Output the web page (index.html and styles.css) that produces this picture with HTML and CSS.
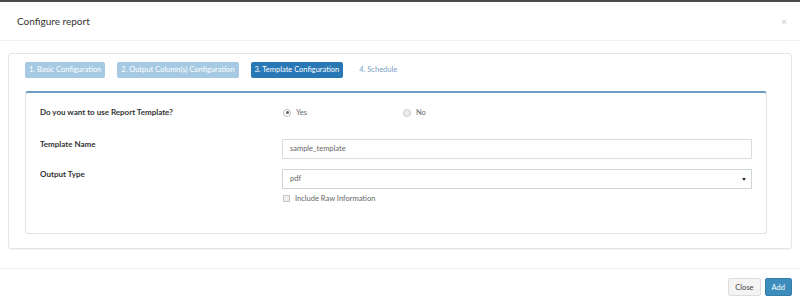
FILE: index.html
```html
<!DOCTYPE html>
<html lang="en">

<head>
    <meta charset="UTF-8">
    <title>Configure report</title>
    <link rel="stylesheet" href="styles.css">
</head>

<body>
    <div class="modal">
        <div class="modal-header">
            <span class="modal-title">Configure report</span>
            <span class="close">&times;</span>
        </div>

        <div class="modal-body">
            <div class="wizard">
                <div class="steps">
                    <span class="step done">1. Basic Configuration</span>
                    <span class="step done">2. Output Column(s) Configuration</span>
                    <span class="step active">3. Template Configuration</span>
                    <span class="step next">4. Schedule</span>
                </div>

                <div class="box">
                    <div class="row row-first">
                        <div class="label">Do you want to use Report Template?</div>
                        <div class="control radios">
                            <span class="option"><span class="radio checked"></span>Yes</span>
                            <span class="option"><span class="radio"></span>No</span>
                        </div>
                    </div>
                    <div class="row">
                        <div class="label">Template Name</div>
                        <div class="control">
                            <div class="input">sample_template</div>
                        </div>
                    </div>
                    <div class="row">
                        <div class="label">Output Type</div>
                        <div class="control">
                            <div class="input select">pdf<span class="caret"></span></div>
                            <div class="check"><span class="checkbox"></span>Include Raw Information</div>
                        </div>
                    </div>
                </div>
            </div>
        </div>

        <div class="modal-footer">
            <button class="btn btn-default">Close</button>
            <button class="btn btn-primary">Add</button>
        </div>
    </div>
</body>

</html>
```

FILE: styles.css
```css
body {
    margin: 0;
    font-family: Lato, "Open Sans", sans-serif;
    color: #333;
    background: #fff;
}

.modal {
    border-top: 2px solid #4a4a4a;
    height: 302px;
}

.modal-header {
    display: flex;
    justify-content: space-between;
    align-items: center;
    height: 38px;
    padding: 0 17px;
    border-bottom: 1px solid #f2f2f2;
}

.modal-title {
    font-size: 10px;
}

.close {
    color: #c8c8c8;
    font-size: 10px;
    margin-right: -4px;
}

.modal-body {
    padding: 12px 8px 19px;
}

.wizard {
    height: 178px;
    border: 1px solid #e4e4e4;
    border-radius: 3px;
    padding: 8px 24px 8px 16px;
    box-shadow: 0 1px 1px rgba(0, 0, 0, 0.04);
}

.steps {
    display: flex;
    gap: 12px;
}

.step {
    height: 16px;
    line-height: 16px;
    padding: 0 4px;
    font-size: 7.5px;
    color: #fff;
    border-radius: 2px;
}

.step.done {
    background-color: #a6cae3;
}

.step.active {
    background-color: #2878b5;
}

.step.next {
    color: #7a9fc2;
}

.box {
    margin-top: 13px;
    height: 126px;
    border: 1px solid #e2e2e2;
    border-top: 2px solid #6f9cc4;
    border-radius: 3px;
    padding: 14px 14px 0;
}

.row {
    display: grid;
    grid-template-columns: 242px 1fr;
    margin-bottom: 10px;
}

.row-first {
    margin-bottom: 21px;
}

.label {
    font-size: 8px;
    font-weight: bold;
    color: #333;
    line-height: 10px;
}

.row-first .label {
    line-height: 11px;
}

.radios {
    display: flex;
    height: 11px;
    align-items: center;
}

.option {
    display: flex;
    align-items: center;
    width: 120px;
    font-size: 7.5px;
    color: #666;
}

.radio {
    width: 6px;
    height: 6px;
    border: 1px solid #c9c9c9;
    border-radius: 50%;
    margin: 0 5px 0 1px;
    background: #eee;
    position: relative;
}

.radio.checked {
    background: #fff;
    border-color: #bbb;
}

.radio.checked::after {
    content: "";
    position: absolute;
    left: 1.5px;
    top: 1.5px;
    width: 3px;
    height: 3px;
    border-radius: 50%;
    background: #666;
}

.input {
    height: 18px;
    line-height: 18px;
    border: 1px solid #dcdcdc;
    padding: 0 7px;
    font-size: 7.5px;
    color: #666;
}

.select {
    display: flex;
    justify-content: space-between;
    align-items: center;
    border-color: #cfd6da;
}

.caret {
    width: 0;
    height: 0;
    border-left: 2px solid transparent;
    border-right: 2px solid transparent;
    border-top: 3px solid #333;
    margin-right: -2px;
}

.check {
    display: flex;
    align-items: center;
    margin-top: 5px;
    font-size: 7.5px;
    color: #666;
}

.checkbox {
    width: 5px;
    height: 5px;
    border: 1px solid #c6c6c6;
    background: #eee;
    margin: 0 5px 0 1px;
}

.modal-footer {
    display: flex;
    justify-content: flex-end;
    gap: 4px;
    border-top: 1px solid #f2f2f2;
    padding: 9px 8px 0;
}

.btn {
    height: 18px;
    padding: 0 6px;
    font-family: Lato, "Open Sans", sans-serif;
    font-size: 7.5px;
    border-radius: 2px;
    border: 1px solid #ddd;
}

.btn-default {
    background-color: #f4f4f4;
    color: #444;
}

.btn-primary {
    background-color: #3c8dbc;
    border-color: #367fa9;
    color: #fff;
}
```
